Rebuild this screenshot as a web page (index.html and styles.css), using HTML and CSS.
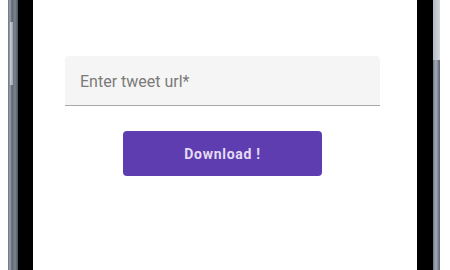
FILE: index.html
```html
<!DOCTYPE html>
<html>
	<head>
		<title>Tweet downloader</title>
		<meta charset="utf-8">
		<link rel="stylesheet" href="styles.css">
	</head>
	<body>
		<div class="phone">
			<div class="gap-left"></div>
			<div class="rim-left"><div class="key-left"></div></div>
			<div class="bezel-left"></div>
			<div class="screen">
				<form class="form">
					<div class="field">
						<span class="placeholder">Enter tweet url*</span>
					</div>
					<button type="button" class="btn">Download !</button>
				</form>
			</div>
			<div class="bezel-right"></div>
			<div class="rim-right"><div class="key-right"></div></div>
			<div class="gap-right"></div>
		</div>
	</body>
</html>
```

FILE: styles.css
```css
body {
	margin: 0;
	background: #fff;
	font-family: Roboto, "Liberation Sans", sans-serif;
}

.phone {
	display: flex;
	height: 270px;
}

.gap-left {
	width: 8px;
}

.gap-right {
	width: 10px;
}

/* metal frame of the phone */
.rim-left {
	width: 10px;
	background: linear-gradient(to right, #6b7380 0, #9aa2ae 20%, #5d6572 40%, #7d8591 70%, #4a525e 100%);
}

.key-left {
	width: 3px;
	height: 63px;
	margin: 22px 0 0 2px;
	background: linear-gradient(to right, #c9cfd8, #9da5b1);
}

.rim-right {
	width: 7px;
	background: linear-gradient(to right, #6c7482 0, #a4acb8 40%, #5a6270 100%);
}

.key-right {
	height: 60px;
	background: linear-gradient(to right, #b3bac5, #d4d9e0);
}

.bezel-left {
	width: 15px;
	background: #000;
}

.bezel-right {
	width: 16px;
	background: #000;
}

.screen {
	flex: 1;
	background: #fff;
	padding: 56px 37px 0 32px;
}

.form {
	display: flex;
	flex-direction: column;
	align-items: center;
	gap: 25px;
}

.field {
	align-self: stretch;
	height: 49px;
	background: #f5f5f5;
	border-bottom: 1px solid #a9a9a9;
	border-radius: 4px 4px 0 0;
	display: flex;
	align-items: center;
	padding: 0 15px;
}

.placeholder {
	font-size: 16px;
	color: #7a7a7a;
	padding-top: 2px;
}

.btn {
	width: 199px;
	height: 45px;
	border: none;
	border-radius: 4px;
	background: #5e3db1;
	color: #e4dcf3;
	font-family: Roboto, "Liberation Sans", sans-serif;
	font-size: 14px;
	font-weight: bold;
	letter-spacing: 0.7px;
}
```
